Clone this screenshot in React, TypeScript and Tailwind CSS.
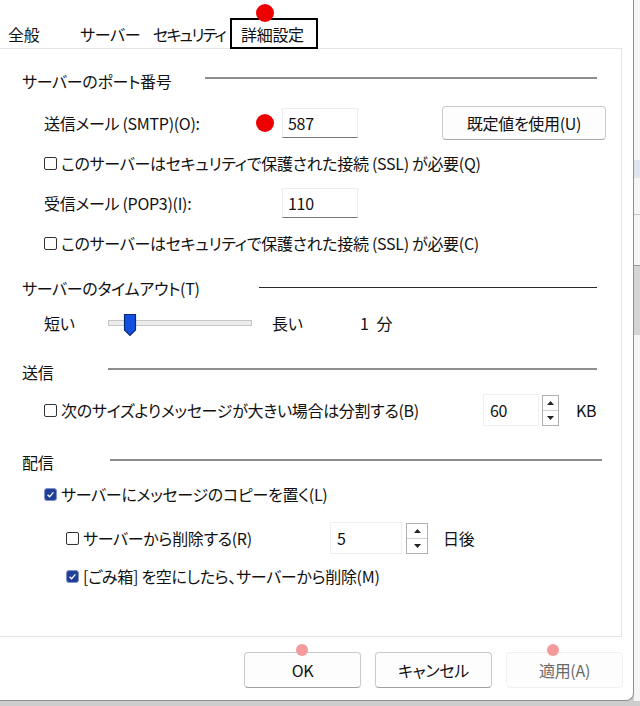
import React from "react";

function Box({ checked }: { checked?: boolean }) {
  if (checked) {
    return (
      <span className="w-[13px] h-[13px] shrink-0 rounded-[3px] bg-[#1f3f99] border border-[#8092c8] flex items-center justify-center">
        <svg width="9" height="9" viewBox="0 0 9 9">
          <path d="M1.6 4.7 L3.6 6.7 L7.4 2.3" stroke="white" strokeWidth="1.3" fill="none" />
        </svg>
      </span>
    );
  }
  return <span className="w-[13px] h-[13px] shrink-0 rounded-[2px] border border-[#333] bg-white" />;
}

function Spinner({ cls }: { cls: string }) {
  return (
    <div className={`flex flex-col border border-[#b0b0b0] bg-white ${cls}`}>
      <div className="flex-1 flex items-center justify-center border-b border-[#d0d0d0]">
        <svg width="7" height="4" viewBox="0 0 7 4">
          <path d="M0 4 L3.5 0 L7 4 Z" fill="#222" />
        </svg>
      </div>
      <div className="flex-1 flex items-center justify-center">
        <svg width="7" height="4" viewBox="0 0 7 4">
          <path d="M0 0 L3.5 4 L7 0 Z" fill="#222" />
        </svg>
      </div>
    </div>
  );
}

function Header({ text, lineStart, lineEnd, dark, lift }: { text: string; lineStart: string; lineEnd: string; dark?: boolean; lift: string }) {
  return (
    <div className="h-[30px] flex items-center">
      <div className={`pl-[22px] ${lineStart}`}>{text}</div>
      <div className={`${lineEnd} ${lift} ${dark ? "h-[1px] bg-[#2a2a2a]" : "h-[2px] bg-[#8e8e8e]"}`} />
    </div>
  );
}

export default function App() {
  return (
    <div className="w-[640px] h-[706px] bg-[#cdcdcd] relative overflow-hidden font-['Noto_Sans_CJK_JP','Noto_Sans',sans-serif] [font-feature-settings:'palt'] text-[16px] tracking-[-0.3px] text-[#111] leading-none whitespace-nowrap">
      <div className="flex h-[701px]">
        <div className="w-[634px] h-full bg-white border-r border-b border-[#8f8f8f] rounded-br-[8px] flex flex-col">
          {/* tabs */}
          <div className="h-[49px] w-[622px] border-b border-[#e4e4e4] flex items-end">
            <div className="w-[72px] h-[31px] flex items-center pl-[8px] pt-[2px]">全般</div>
            <div className="w-[73px] h-[31px] flex items-center pl-[8px] pt-[2px]">サーバー</div>
            <div className="w-[85px] h-[31px] flex items-center pl-[8px] pt-[2px] tracking-[-1.8px]">セキュリティ</div>
            <div className="w-[88px] h-[31px] mb-[-1px] border-2 border-black bg-white flex items-center pl-[9px] pt-[1px]">詳細設定</div>
          </div>

          {/* panel */}
          <div className="w-[622px] h-[588px] border-r border-b border-[#e4e4e4] flex flex-col">
            <div className="mt-[17px]">
              <Header text="サーバーのポート番号" lineStart="w-[205px]" lineEnd="w-[392px]" lift="mb-[6px]" />
            </div>

            <div className="mt-[12px] h-[30px] flex items-center pl-[44px]">
              <div className="w-[238px]">送信メール (SMTP)(O):</div>
              <div className="w-[76px] h-[30px] border border-[#ececec] border-b-[#7a7a7a] flex items-center pl-[5px]">587</div>
              <div className="ml-[84px] w-[164px] h-[34px] rounded-[4px] border border-[#c9c9c9] border-b-[#a9a9a9] bg-[#fdfdfd] flex items-center justify-center">既定値を使用(U)</div>
            </div>

            <div className="mt-[10px] h-[30px] flex items-center pl-[44px] gap-[4px]">
              <Box />
              <span>このサーバーはセキュリティで保護された接続 (SSL) が必要(Q)</span>
            </div>

            <div className="mt-[10px] h-[30px] flex items-center pl-[44px]">
              <div className="w-[238px]">受信メール (POP3)(I):</div>
              <div className="w-[76px] h-[30px] border border-[#ececec] border-b-[#7a7a7a] flex items-center pl-[5px]">110</div>
            </div>

            <div className="mt-[10px] h-[30px] flex items-center pl-[44px] gap-[4px]">
              <Box />
              <span>このサーバーはセキュリティで保護された接続 (SSL) が必要(C)</span>
            </div>

            <div className="mt-[15px]">
              <Header text="サーバーのタイムアウト(T)" lineStart="w-[259px]" lineEnd="w-[338px]" dark lift="mb-[1px]" />
            </div>

            <div className="mt-[5px] h-[30px] flex items-center pl-[44px]">
              <div className="w-[64px]">短い</div>
              <div className="w-[144px] h-[6px] border border-[#c6c6c6] bg-[#ececec] flex items-center">
                <div className="ml-[14px] mt-[4px] w-[14px] h-[24px] shrink-0">
                  <svg width="14" height="24" viewBox="0 0 14 24">
                    <path d="M1.5 1.5 H12.5 V17 L7 22.5 L1.5 17 Z" fill="#1450e0" stroke="#0a2a7c" strokeWidth="1.2" />
                  </svg>
                </div>
              </div>
              <div className="ml-[20px] w-[88px]">長い</div>
              <div className="flex gap-[8px]">
                <span>1</span>
                <span>分</span>
              </div>
            </div>

            <div className="mt-[19px]">
              <Header text="送信" lineStart="w-[108px]" lineEnd="w-[489px]" lift="mb-[7px]" />
            </div>

            <div className="mt-[7px] h-[32px] flex items-center pl-[44px]">
              <div className="w-[439px] flex items-center gap-[4px]">
                <Box />
                <span>次のサイズよりメッセージが大きい場合は分割する(B)</span>
              </div>
              <div className="w-[56px] h-[32px] border border-[#f0f0f0] flex items-center pl-[6px]">60</div>
              <Spinner cls="ml-[3px] w-[17px] h-[31px]" />
              <div className="ml-[17px]">KB</div>
            </div>

            <div className="mt-[21px]">
              <Header text="配信" lineStart="w-[110px]" lineEnd="w-[492px]" lift="mb-[4px]" />
            </div>

            <div className="mt-[2px] h-[30px] flex items-center pl-[44px] gap-[4px]">
              <Box checked />
              <span>サーバーにメッセージのコピーを置く(L)</span>
            </div>

            <div className="mt-[13px] h-[32px] flex items-center pl-[66px]">
              <div className="w-[264px] flex items-center gap-[4px]">
                <Box />
                <span>サーバーから削除する(R)</span>
              </div>
              <div className="w-[72px] h-[32px] border border-[#f0f0f0] flex items-center pl-[6px]">5</div>
              <Spinner cls="ml-[4px] w-[22px] h-[31px]" />
              <div className="ml-[15px]">日後</div>
            </div>

            <div className="mt-[7px] h-[30px] flex items-center pl-[66px] gap-[4px]">
              <Box checked />
              <span>[ごみ箱] を空にしたら、サーバーから削除(M)</span>
            </div>
          </div>

          {/* buttons */}
          <div className="flex justify-end gap-[14px] pr-[10px] pt-[15px]">
            <div className="w-[117px] h-[36px] rounded-[4px] border border-[#cacaca] border-b-[#a0a0a0] bg-[#fdfdfd] flex items-center justify-center">OK</div>
            <div className="w-[117px] h-[36px] rounded-[4px] border border-[#cacaca] border-b-[#a0a0a0] bg-[#fdfdfd] flex items-center justify-center">キャンセル</div>
            <div className="w-[117px] h-[36px] rounded-[4px] border border-[#f0f0f0] bg-[#fdfdfd] flex items-center justify-center text-[#6a6a6a]">適用(A)</div>
          </div>
        </div>

        {/* background app strip */}
        <div className="flex-1 bg-[#f5f5f5] flex flex-col">
          <div className="h-[160px]" />
          <div className="h-[18px] bg-[#dfe5ec]" />
          <div className="h-[37px] border-b border-[#c8c8c8]" />
          <div className="h-[50px]" />
          <div className="h-[70px] bg-[#d4d4d4] border-t border-[#999]" />
        </div>
      </div>

      {/* annotation dots */}
      <div className="absolute left-[256px] top-[4px] w-[18px] h-[18px] rounded-full bg-[#ee0000]" />
      <div className="absolute left-[256px] top-[114px] w-[18px] h-[18px] rounded-full bg-[#ee0000]" />
      <div className="absolute left-[296px] top-[644px] w-[12px] h-[12px] rounded-full bg-[#f59a9c]" />
      <div className="absolute left-[547px] top-[644px] w-[12px] h-[12px] rounded-full bg-[#f59a9c]" />
    </div>
  );
}
